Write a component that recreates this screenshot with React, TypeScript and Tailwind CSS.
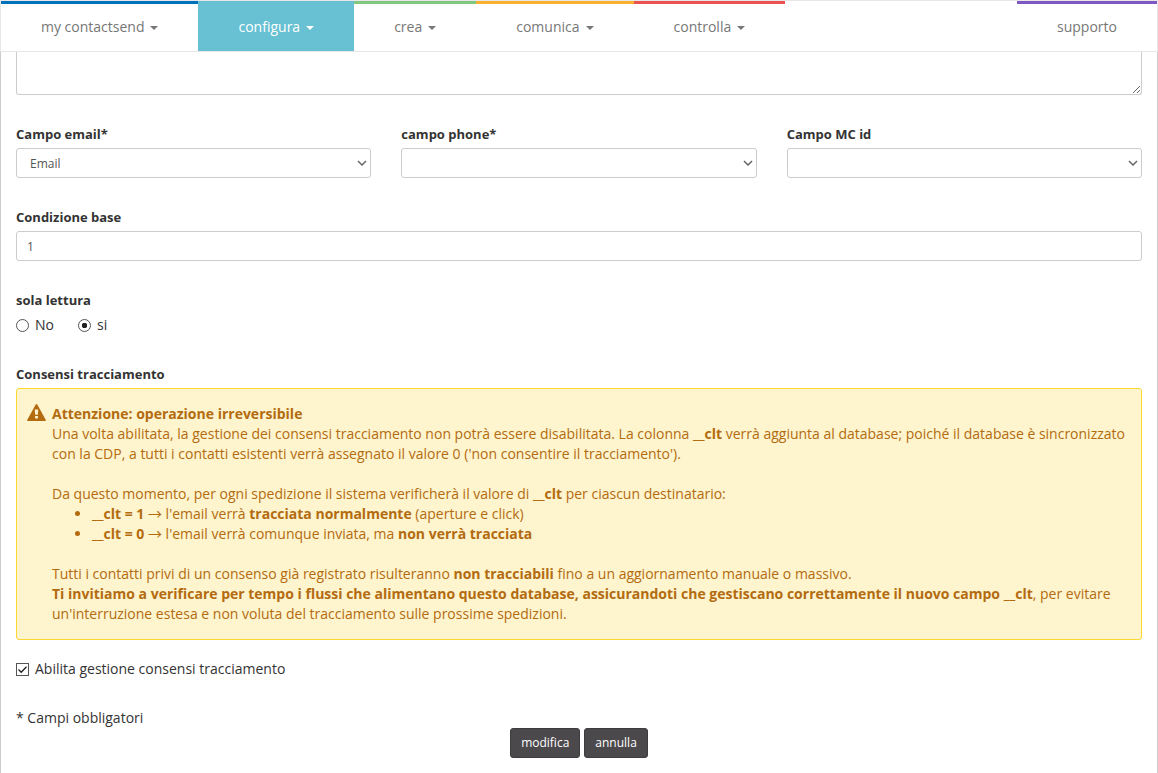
import React, { useId, useState } from 'react';

const caret = (
  <svg viewBox="0 0 8 4" className="mt-px h-1 w-2 fill-current" aria-hidden="true">
    <path d="M0 0h8L4 4z" />
  </svg>
);

const arrow = <span className="font-['Noto_Sans_CJK_JP',sans-serif] leading-none">→</span>;

const menus = [
  { label: 'my contactsend', style: 'border-[#0071bb] text-[#777]' },
  { label: 'configura', style: 'border-[#67c1d3] bg-[#67c1d3] text-white' },
  { label: 'crea', style: 'border-[#80c880] text-[#777]' },
  { label: 'comunica', style: 'border-[#f7b030] text-[#777]' },
  { label: 'controlla', style: 'border-[#ec5252] text-[#777]' },
];

function Field({ label, children }: { label: string; children: (id: string) => React.ReactNode }) {
  const id = useId();
  return (
    <div className="flex flex-col gap-1">
      <label htmlFor={id} className="text-[13px] leading-5 font-bold">
        {label}
      </label>
      {children(id)}
    </div>
  );
}

function SelectField({ label, options }: { label: string; options: string[] }) {
  return (
    <Field label={label}>
      {(id) => (
        <div className="relative">
          <select
            id={id}
            className="h-[30px] w-full appearance-none rounded-[3px] border border-[#ccc] bg-white px-[13px] pt-px text-[12px] text-[#555]"
          >
            {options.map((o) => (
              <option key={o}>{o}</option>
            ))}
          </select>
          <svg
            viewBox="0 0 10 6"
            className="pointer-events-none absolute top-3 right-1 h-1.5 w-2.5 fill-none stroke-[#666]"
            strokeWidth="1.5"
            aria-hidden="true"
          >
            <path d="M1 1l4 4 4-4" />
          </svg>
        </div>
      )}
    </Field>
  );
}

function Radio({ label, checked, onChange }: { label: string; checked: boolean; onChange: () => void }) {
  return (
    <label className="flex items-center gap-1.5">
      <input
        type="radio"
        name="sola-lettura"
        checked={checked}
        onChange={onChange}
        className="size-[13px] appearance-none rounded-full border border-[#555] bg-white checked:bg-[radial-gradient(circle,#222_0_2.5px,transparent_3px)]"
      />
      {label}
    </label>
  );
}

export default function App() {
  const [readOnly, setReadOnly] = useState(true);
  const [consent, setConsent] = useState(true);

  return (
    <div className="flex min-h-screen flex-col bg-white font-['Open_Sans',sans-serif] text-[14px] leading-5 text-[#333]">
      <nav className="flex border border-[#e7e7e7]">
        {menus.map((m) => (
          <button
            key={m.label}
            type="button"
            className={`flex items-center gap-1.5 border-t-3 px-10 pt-[13px] pb-3.5 ${m.style}`}
          >
            {m.label}
            {caret}
          </button>
        ))}
        <a href="#supporto" className="ml-auto border-t-3 border-[#7e57c2] px-10 pt-[13px] pb-3.5 text-[#777]">
          supporto
        </a>
      </nav>

      <form
        className="flex flex-1 flex-col gap-[29px] border-x border-[#ccc] px-[15px] pb-[15px]"
        onSubmit={(e) => e.preventDefault()}
      >
        <textarea
          aria-label="Descrizione"
          className="block h-[43px] w-full rounded-b-[3px] border border-t-0 border-[#ccc] px-2.5"
        />

        <div className="grid grid-cols-3 gap-[30px]">
          <SelectField label="Campo email*" options={['Email']} />
          <SelectField label="campo phone*" options={['']} />
          <SelectField label="Campo MC id" options={['']} />
        </div>

        <Field label="Condizione base">
          {(id) => (
            <input
              id={id}
              type="text"
              defaultValue="1"
              className="h-[30px] w-full rounded-[3px] border border-[#ccc] px-2.5 text-[12px] text-[#555]"
            />
          )}
        </Field>

        <fieldset>
          <legend className="mb-[5px] text-[13px] leading-5 font-bold">sola lettura</legend>
          <div className="flex gap-6">
            <Radio label="No" checked={!readOnly} onChange={() => setReadOnly(false)} />
            <Radio label="si" checked={readOnly} onChange={() => setReadOnly(true)} />
          </div>
        </fieldset>

        <div className="flex flex-col">
          <h2 className="mb-1 text-[13px] leading-5 font-bold">Consensi tracciamento</h2>
          <div className="flex gap-1.5 rounded-[3px] border border-[#fdd835] bg-[#fef4cd] px-2.5 py-[15px] text-[#b36b10]">
            <svg viewBox="0 0 19 17" className="h-[17px] w-[19px] shrink-0" aria-hidden="true">
              <path
                fill="currentColor"
                fillRule="evenodd"
                d="M9.500 0c.3 0 .6.2.8.500l8.500 15.400c.3.500 0 1.100-.6 1.100H.8c-.6 0-.9-.6-.6-1.100L8.700.5c.2-.3.5-.5.8-.5zM7.700 5.500l.5 5.200h2.600l.5-5.200zM8.100 12v2.500h2.800V12z"
              />
            </svg>
            <div>
              <p className="font-bold">Attenzione: operazione irreversibile</p>
              <p>
                Una volta abilitata, la gestione dei consensi tracciamento non potrà essere disabilitata. La colonna{' '}
                <b>__clt</b> verrà aggiunta al database; poiché il database è sincronizzato con la CDP, a tutti i
                contatti esistenti verrà assegnato il valore 0 ('non consentire il tracciamento').
              </p>
              <p className="mt-5">
                Da questo momento, per ogni spedizione il sistema verificherà il valore di <b>__clt</b> per ciascun
                destinatario:
              </p>
              <ul className="list-disc pl-10">
                <li>
                  <b>__clt = 1</b> {arrow} l'email verrà <b>tracciata normalmente</b> (aperture e click)
                </li>
                <li>
                  <b>__clt = 0</b> {arrow} l'email verrà comunque inviata, ma <b>non verrà tracciata</b>
                </li>
              </ul>
              <p className="mt-5">
                Tutti i contatti privi di un consenso già registrato risulteranno <b>non tracciabili</b> fino a un
                aggiornamento manuale o massivo.
              </p>
              <p>
                <b>
                  Ti invitiamo a verificare per tempo i flussi che alimentano questo database, assicurandoti che
                  gestiscano correttamente il nuovo campo __clt
                </b>
                , per evitare un'interruzione estesa e non voluta del tracciamento sulle prossime spedizioni.
              </p>
            </div>
          </div>

          <label className="mt-[19px] flex items-center gap-1.5">
            <span className="relative flex">
              <input
                type="checkbox"
                checked={consent}
                onChange={(e) => setConsent(e.target.checked)}
                className="peer size-[13px] appearance-none border border-[#555] bg-white"
              />
              <svg
                viewBox="0 0 13 13"
                className="pointer-events-none absolute inset-0 hidden size-[13px] fill-none stroke-[#222] peer-checked:block"
                strokeWidth="1.3"
                aria-hidden="true"
              >
                <path d="M2.500 6.500l2.700 2.800L10.500 3.700" />
              </svg>
            </span>
            Abilita gestione consensi tracciamento
          </label>
        </div>

        <div>
          <p>* Campi obbligatori</p>
          <div className="flex justify-center gap-1 text-[12px] text-white">
            <button type="submit" className="h-[30px] rounded-[3px] border border-[#3f3c3f] bg-[#4c494c] px-2.5 font-medium">
              modifica
            </button>
            <button type="button" className="h-[30px] rounded-[3px] border border-[#3f3c3f] bg-[#4c494c] px-2.5 font-medium">
              annulla
            </button>
          </div>
        </div>
      </form>
    </div>
  );
}
